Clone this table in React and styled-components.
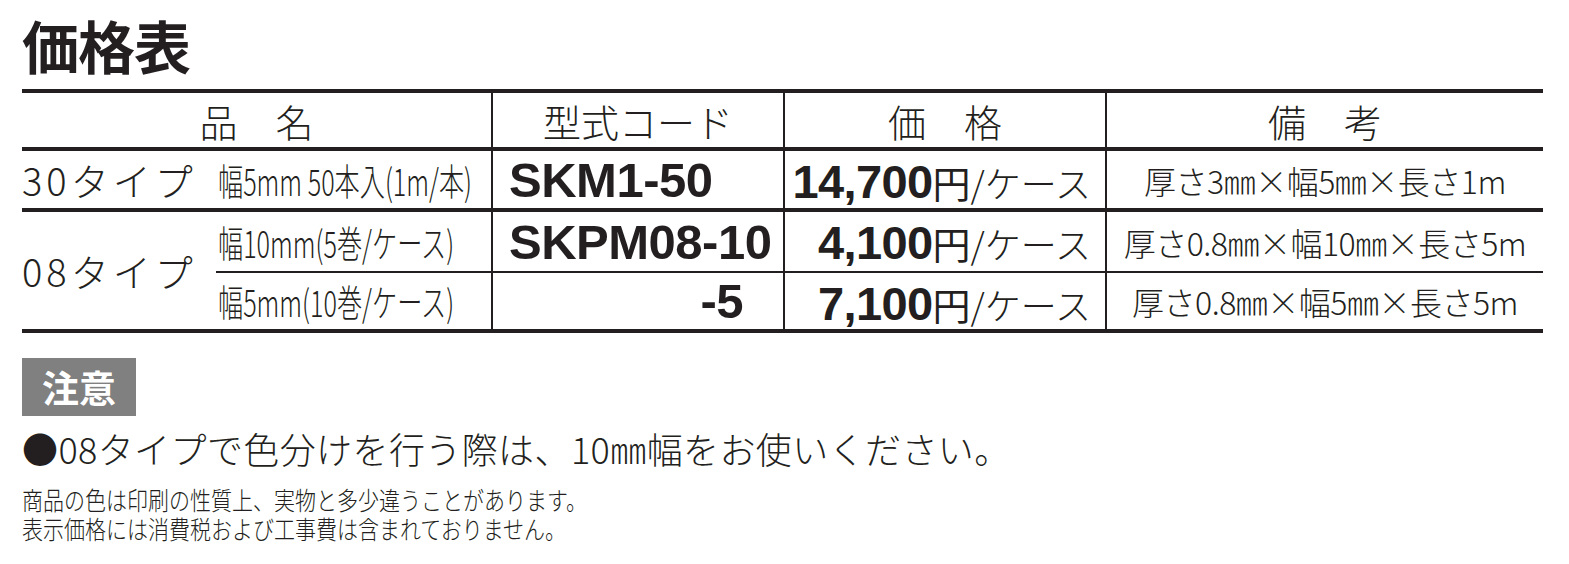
import React from 'react';
import styled, { createGlobalStyle } from 'styled-components';

const GlobalStyle = createGlobalStyle`
  html, body {
    margin: 0;
    padding: 0;
    background: #fff;
  }
  body {
    font-family: "Noto Sans CJK JP", "Noto Sans", sans-serif;
    color: #231f20;
  }
`;

const Page = styled.div`
  width: 1569px;
  height: 564px;
  padding: 10px 26px 0 22px;
  box-sizing: border-box;
  overflow: hidden;
`;

const Title = styled.h1`
  margin: 0 0 11px;
  font-size: 57px;
  line-height: 68px;
  font-weight: 700;
  letter-spacing: -1px;
`;

const PriceGrid = styled.div`
  display: grid;
  width: 1521px;
  grid-template-columns: 194px 275px 292px 322px 438px;
  grid-template-rows: 58px 61px 61px 56px;
  border-top: 4px solid #231f20;
  border-bottom: 4px solid #231f20;
`;

const Cell = styled.div`
  box-sizing: border-box;
  display: flex;
  align-items: center;
  white-space: nowrap;
  font-weight: 300;
  border-left: ${(p) => (p.$left ? '2px solid #231f20' : 'none')};
  border-bottom: ${(p) =>
    p.$bottom === 'thick' ? '4px solid #231f20' : p.$bottom === 'thin' ? '2px solid #231f20' : 'none'};
`;

const HeadCell = styled(Cell)`
  justify-content: center;
  font-size: 38px;
  grid-column: ${(p) => p.$span || 'auto'};
`;

const TypeCell = styled(Cell)`
  font-size: 38px;
  grid-row: ${(p) => p.$rows || 'auto'};
  letter-spacing: 4px;
`;

const SpecCell = styled(Cell)`
  padding-left: 2px;
  font-size: 37px;
`;

const Condensed = styled.span`
  display: inline-block;
  transform: scaleX(${(p) => p.$sx});
  transform-origin: left center;
`;

const CodeCell = styled(Cell)`
  justify-content: ${(p) => (p.$right ? 'flex-end' : 'flex-start')};
  padding: ${(p) => (p.$right ? '0 40px 0 0' : '0 0 0 16px')};
  font-family: "Liberation Sans", Arial, sans-serif;
  font-weight: 700;
  font-size: 49px;
  letter-spacing: -0.5px;
`;

const PriceCell = styled(Cell)`
  justify-content: flex-end;
  align-items: baseline;
  padding: 0 14px 0 0;
  line-height: 61px;
`;

const Amount = styled.span`
  font-family: "Liberation Sans", Arial, sans-serif;
  font-weight: 700;
  font-size: 47px;
  letter-spacing: -0.6px;
`;

const Yen = styled.span`
  font-size: 38px;
  font-weight: 400;
`;

const Unit = styled.span`
  font-size: 36px;
`;

const NoteCell = styled(Cell)`
  justify-content: center;
  font-size: 32px;
  letter-spacing: -0.5px;
`;

const NoticeBadge = styled.div`
  display: inline-flex;
  align-items: center;
  justify-content: center;
  margin-top: 25px;
  width: 114px;
  height: 58px;
  background: #808080;
  color: #fff;
  font-size: 37px;
  font-weight: 700;
`;

const NoticeText = styled.p`
  margin: 10px 0 0;
  font-size: 36px;
  font-weight: 300;
  line-height: 44px;
  letter-spacing: 0.4px;
`;

const FinePrint = styled.div`
  margin-top: 15px;
  font-size: 25px;
  line-height: 29px;
  font-weight: 300;
`;

const FineLine = styled.div`
  white-space: nowrap;
  height: 29px;
`;

const rows = [
  {
    key: '30',
    spec: '幅5mm 50本入(1m/本)',
    code: 'SKM1-50',
    amount: '14,700',
    note: '厚さ3㎜×幅5㎜×長さ1m',
  },
  {
    key: '08a',
    spec: '幅10mm(5巻/ケース)',
    code: 'SKPM08-10',
    amount: '4,100',
    note: '厚さ0.8㎜×幅10㎜×長さ5m',
  },
  {
    key: '08b',
    spec: '幅5mm(10巻/ケース)',
    code: '-5',
    right: true,
    amount: '7,100',
    note: '厚さ0.8㎜×幅5㎜×長さ5m',
  },
];

function PriceRow({ row, bottom }) {
  return (
    <>
      <SpecCell $bottom={bottom}>
        <Condensed $sx={0.68}>{row.spec}</Condensed>
      </SpecCell>
      <CodeCell $left $bottom={bottom} $right={row.right}>
        {row.code}
      </CodeCell>
      <PriceCell $left $bottom={bottom}>
        <Amount>{row.amount}</Amount>
        <Yen>円</Yen>
        <Unit>/ケース</Unit>
      </PriceCell>
      <NoteCell $left $bottom={bottom}>
        {row.note}
      </NoteCell>
    </>
  );
}

export default function App() {
  return (
    <>
      <GlobalStyle />
      <Page>
        <Title>価格表</Title>
        <PriceGrid>
          <HeadCell $span="1 / span 2" $bottom="thick">品　名</HeadCell>
          <HeadCell $left $bottom="thick">型式コード</HeadCell>
          <HeadCell $left $bottom="thick">価　格</HeadCell>
          <HeadCell $left $bottom="thick">備　考</HeadCell>

          <TypeCell $bottom="thick">30タイプ</TypeCell>
          <PriceRow row={rows[0]} bottom="thick" />

          <TypeCell $rows="3 / span 2">08タイプ</TypeCell>
          <PriceRow row={rows[1]} bottom="thin" />
          <PriceRow row={rows[2]} />
        </PriceGrid>

        <NoticeBadge>注意</NoticeBadge>
        <NoticeText>●08タイプで色分けを行う際は、10㎜幅をお使いください。</NoticeText>

        <FinePrint>
          <FineLine>
            <Condensed $sx={0.84}>商品の色は印刷の性質上、実物と多少違うことがあります。</Condensed>
          </FineLine>
          <FineLine>
            <Condensed $sx={0.84}>表示価格には消費税および工事費は含まれておりません。</Condensed>
          </FineLine>
        </FinePrint>
      </Page>
    </>
  );
}
